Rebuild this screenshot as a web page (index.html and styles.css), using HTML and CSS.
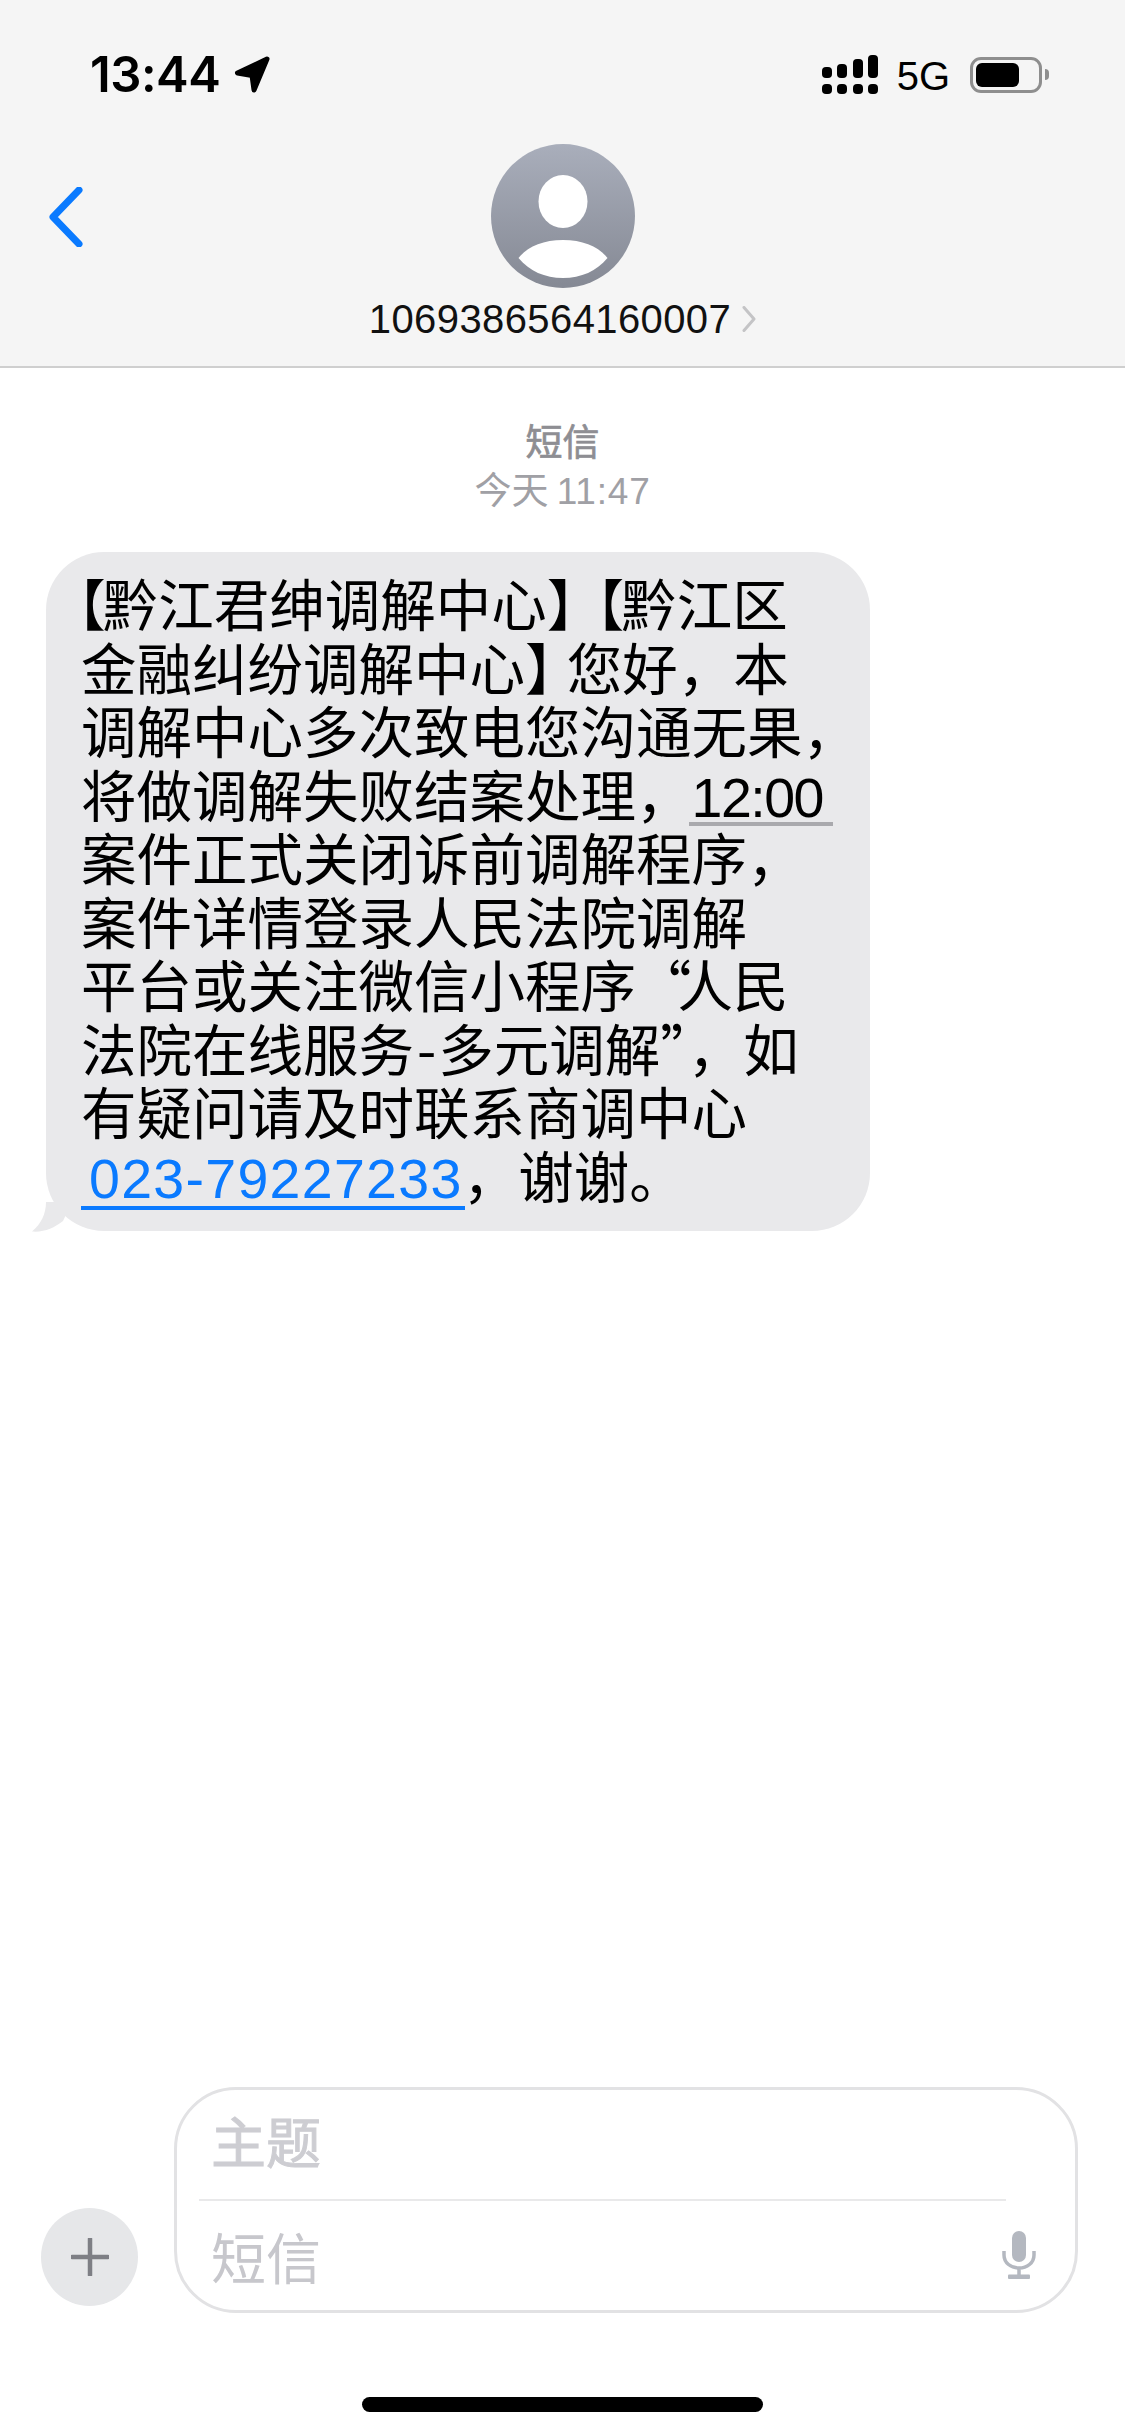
FILE: index.html
```html
<!DOCTYPE html>
<html lang="zh-CN">
<head>
<meta charset="utf-8">
<title>短信</title>
<link rel="stylesheet" href="styles.css">
</head>
<body>
<div class="phone">
  <header class="topbar">
    <div class="status">
      <div class="status-left">
        <span class="clock">13:44</span>
        <svg class="loc" viewBox="0 0 37 37"><path d="M33 3 L3.500 17 L18 19.500 L20 34 Z"/></svg>
      </div>
      <div class="status-right">
        <svg class="signal" viewBox="0 0 56 39">
          <rect x="0" y="12" width="10" height="11" rx="4"/>
          <rect x="15" y="9" width="10" height="14" rx="4"/>
          <rect x="31" y="4" width="10" height="19" rx="4"/>
          <rect x="46" y="0" width="10" height="23" rx="4"/>
          <rect x="0" y="29" width="10" height="10" rx="4"/>
          <rect x="15" y="29" width="10" height="10" rx="4"/>
          <rect x="31" y="29" width="10" height="10" rx="4"/>
          <rect x="46" y="29" width="10" height="10" rx="4"/>
        </svg>
        <span class="net">5G</span>
        <div class="battery"><div class="battery-level"></div></div>
        <div class="battery-nub"></div>
      </div>
    </div>
    <div class="nav">
      <svg class="back" viewBox="0 0 34 60"><path d="M30 3 L4 30 L30 57"/></svg>
      <svg class="avatar" viewBox="0 0 144 144">
        <defs>
          <linearGradient id="avatarFill" x1="0" y1="0" x2="0" y2="1">
            <stop offset="0" stop-color="#a9aebb"/>
            <stop offset="1" stop-color="#858994"/>
          </linearGradient>
        </defs>
        <circle cx="72" cy="72" r="72" fill="url(#avatarFill)"/>
        <ellipse cx="72" cy="57.500" rx="24.500" ry="26.500" fill="#fff"/>
        <path d="M27.500 114 C36 103 52 96 72 96 C92 96 108 103 116.500 114 C106 127 90 134 72 134 C54 134 38 127 27.500 114Z" fill="#fff"/>
      </svg>
    </div>
    <div class="contact">
      <span class="contact-number">1069386564160007</span>
      <svg class="contact-arrow" viewBox="0 0 14 26"><path d="M2 1.500 L12 13 L2 24.500"/></svg>
    </div>
  </header>

  <main class="thread">
    <div class="stamp">
      <div class="stamp-kind">短信</div>
      <div class="stamp-time">今天 <span class="latin">11:47</span></div>
    </div>
    <div class="bubble">
      <svg class="tail" viewBox="0 0 40 30"><path d="M14 0 C14 12 9 22 0 29.500 C12 30.500 22 26 31 19 L40 0 Z"/></svg>
      <p class="message"><span class="open">【</span>黔江君绅调解中心<span class="close">】</span><span class="open">【</span>黔江区<br>金融纠纷调解中心<span class="close">】</span>您好，本<br>调解中心多次致电您沟通无果，<br>将做调解失败结案处理，<span class="detected">12:00</span><br>案件正式关闭诉前调解程序，<br>案件详情登录人民法院调解<br>平台或关注微信小程序<span class="quote-open">“</span>人民<br>法院在线服务<span class="dash">-</span>多元调解<span class="quote-close">”</span>，如<br>有疑问请及时联系商调中心<br><a class="phone-link">023-79227233</a>，谢谢。</p>
    </div>
  </main>

  <footer class="composer">
    <div class="plus">
      <svg class="plus-icon" viewBox="0 0 38 38"><path d="M19 1 V37 M1 19 H37"/></svg>
    </div>
    <div class="field">
      <div class="field-subject">主题</div>
      <div class="field-rule"></div>
      <div class="field-body">
        <span class="field-text">短信</span>
        <svg class="mic" viewBox="0 0 34 48">
          <rect x="10" y="0" width="14" height="31" rx="7" class="mic-fill"/>
          <path d="M2 20 V24 C2 32 9 37 17 37 C25 37 32 32 32 24 V20 M17 37 V45" class="mic-line"/>
          <rect x="6" y="43.500" width="22" height="4.500" rx="1" class="mic-fill"/>
        </svg>
      </div>
    </div>
  </footer>
  <div class="home-row"><div class="home-bar"></div></div>
</div>
</body>
</html>
```

FILE: styles.css
```css
* { box-sizing: border-box; }

html, body {
  margin: 0;
  padding: 0;
  background: #fff;
}

body {
  font-family: "Noto Sans CJK SC", "Liberation Sans", sans-serif;
  color: #000;
}

.phone {
  width: 1125px;
  height: 2435px;
  display: flex;
  flex-direction: column;
  overflow: hidden;
}

/* Top bar */
.topbar {
  height: 368px;
  flex: none;
  background: #f5f5f5;
  border-bottom: 2px solid #cfcfcf;
  padding-top: 55px;
}

.status {
  height: 39px;
  display: flex;
  justify-content: space-between;
  align-items: center;
  padding: 0 76px 0 90px;
}

.status-left, .status-right {
  display: flex;
  align-items: center;
}

.clock {
  font-family: Inter, sans-serif;
  font-weight: 600;
  font-size: 49px;
  line-height: 39px;
  letter-spacing: -0.500px;
}

.loc {
  width: 37px;
  height: 37px;
  margin-left: 14px;
}

.loc path {
  fill: #000;
  stroke: #000;
  stroke-width: 5;
  stroke-linejoin: round;
}

.signal {
  width: 56px;
  height: 39px;
  fill: #000;
}

.net {
  font-family: "Liberation Sans", sans-serif;
  font-size: 40px;
  line-height: 39px;
  margin-left: 19px;
  position: relative;
  top: 2px;
}

.battery {
  width: 72px;
  height: 36px;
  margin-left: 20px;
  border: 3px solid #8e8e8e;
  border-radius: 11px;
  padding: 3px;
}

.battery-level {
  width: 43px;
  height: 24px;
  background: #000;
  border-radius: 6px;
}

.battery-nub {
  width: 4px;
  height: 11px;
  margin-left: 3px;
  background: #8e8e8e;
  border-radius: 0 4px 4px 0;
}

.nav {
  display: grid;
  grid-template-columns: 1fr auto 1fr;
  align-items: center;
  margin-top: 50px;
  padding-left: 49px;
  padding-right: 49px;
}

.back {
  width: 34px;
  height: 60px;
  margin-top: 2px;
}

.back path {
  fill: none;
  stroke: #0a7aff;
  stroke-width: 7;
  stroke-linecap: round;
  stroke-linejoin: round;
}

.avatar {
  width: 144px;
  height: 144px;
  display: block;
}

.contact {
  display: flex;
  justify-content: center;
  align-items: center;
  margin-top: 8px;
  height: 46px;
  gap: 11px;
}

.contact-number {
  font-family: "Liberation Sans", sans-serif;
  font-size: 40px;
  line-height: 46px;
  letter-spacing: 0.400px;
  color: #111;
}

.contact-arrow {
  width: 14px;
  height: 26px;
}

.contact-arrow path {
  fill: none;
  stroke: #c4c4c6;
  stroke-width: 3;
  stroke-linecap: round;
  stroke-linejoin: round;
}

/* Thread */
.thread {
  flex: 1;
  padding-top: 48px;
}

.stamp {
  text-align: center;
}

.stamp-kind {
  font-size: 37px;
  -webkit-text-stroke: 0.700px #8e8e93;
  line-height: 48px;
  color: #8e8e93;
}

.stamp-time {
  font-size: 37px;
  line-height: 48px;
  color: #a0a0a5;
}

.latin {
  font-family: "Liberation Sans", sans-serif;
  line-height: 0;
  letter-spacing: 0.800px;
}

.bubble {
  position: relative;
  width: 824px;
  margin: 40px 0 0 46px;
  padding: 19px 0 25px 35px;
  background: #e9e9eb;
  border-radius: 58px;
}

.tail {
  position: absolute;
  left: -14px;
  bottom: -1px;
  width: 40px;
  height: 30px;
  fill: #e9e9eb;
}

.message {
  margin: 0;
  font-size: 55.500px;
  line-height: 63.500px;
  white-space: nowrap;
  text-spacing-trim: space-all;
  font-kerning: none;
}

/* Corner brackets sit on half an em, with a little air on the outer side */
.open {
  font-feature-settings: "halt" 1;
  margin-right: -3px;
  margin-left: 8px;
}

.open:first-child {
  margin-left: -3px;
}

.close {
  font-feature-settings: "halt" 1;
  margin-right: 14px;
}

.quote-open {
  margin-right: -14px;
}

.quote-close {
  margin-right: -28px;
}

.dash {
  margin: 0 2px 0 3px;
}

.detected {
  position: relative;
  font-family: "Liberation Sans", sans-serif;
  line-height: 0;
  letter-spacing: -1.500px;
}

.detected::after {
  content: "";
  position: absolute;
  left: -3px;
  right: -10px;
  bottom: 3px;
  height: 4px;
  background: #a9a9ad;
}

.phone-link {
  position: relative;
  font-family: "Liberation Sans", sans-serif;
  line-height: 0;
  color: #0a7aff;
  letter-spacing: 1.300px;
  margin-left: 8px;
  text-decoration: none;
}

.phone-link::after {
  content: "";
  position: absolute;
  left: -8px;
  right: -2px;
  bottom: 0;
  height: 4px;
  background: #0a7aff;
}

/* Composer */
.composer {
  flex: none;
  display: flex;
  align-items: flex-end;
  gap: 36px;
  padding: 0 47px 0 41px;
}

.plus {
  width: 97px;
  height: 98px;
  margin-bottom: 7px;
  flex: none;
  display: flex;
  align-items: center;
  justify-content: center;
  background: #e6e7e9;
  border-radius: 50%;
}

.plus-icon {
  width: 38px;
  height: 38px;
}

.plus-icon path {
  fill: none;
  stroke: #7e7f85;
  stroke-width: 4.500;
  stroke-linecap: round;
}

.field {
  flex: 1;
  height: 226px;
  border: 3px solid #e2e2e4;
  border-radius: 62px;
  padding-left: 22px;
}

.field-subject {
  height: 109px;
  padding-left: 12px;
  font-size: 55px;
  -webkit-text-stroke: 1px #cdcdd2;
  line-height: 98px;
  color: #cdcdd2;
}

.field-rule {
  height: 2px;
  margin-right: 69px;
  background: #e9e9ea;
}

.field-body {
  display: flex;
  align-items: center;
  justify-content: space-between;
  height: 108px;
  padding: 0 39px 0 12px;
}

.field-text {
  font-size: 55px;
  line-height: 104px;
  color: #c7c7cc;
}

.mic {
  width: 34px;
  height: 48px;
}

.mic-fill {
  fill: #b4b8c0;
}

.mic-line {
  fill: none;
  stroke: #b4b8c0;
  stroke-width: 3.500;
}

/* Home indicator */
.home-row {
  flex: none;
  display: flex;
  justify-content: center;
  padding: 84px 0 23px;
}

.home-bar {
  width: 401px;
  height: 15px;
  background: #000;
  border-radius: 8px;
}
```
